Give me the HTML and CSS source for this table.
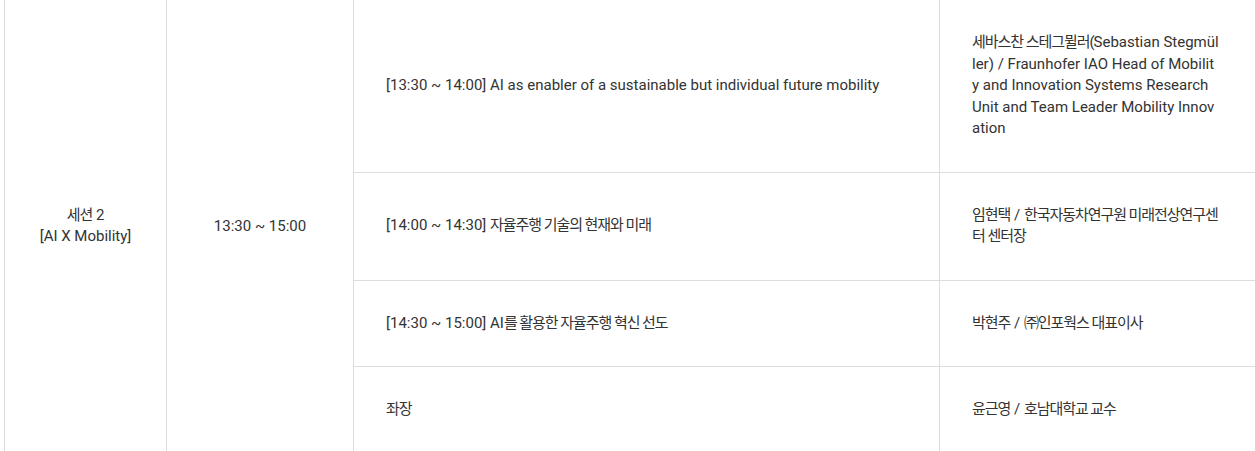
FILE: index.html
```html
<!DOCTYPE html>
<html lang="ko">
<head>
<meta charset="utf-8">
<link rel="stylesheet" href="styles.css">
</head>
<body>
<table class="program">
  <colgroup>
    <col class="c-session">
    <col class="c-time">
    <col class="c-title">
    <col class="c-speaker">
  </colgroup>
  <tbody>
    <tr>
      <td class="center" rowspan="4"><span class="ko">세션</span> 2<br>[AI X Mobility]</td>
      <td class="center" rowspan="4">13:30 ~ 15:00</td>
      <td>[13:30 ~ 14:00] AI as enabler of a sustainable but individual future mobility</td>
      <td class="speaker"><span class="ko">세바스찬 스테그뮐러(</span>Sebastian Stegmüller) / Fraunhofer IAO Head of Mobility and Innovation Systems Research Unit and Team Leader Mobility Innovation</td>
    </tr>
    <tr>
      <td>[14:00 ~ 14:30] <span class="ko">자율주행 기술의 현재와 미래</span></td>
      <td class="speaker"><span class="ko">임현택</span> / <span class="ko">한국자동차연구원 미래전상연구센터 센터장</span></td>
    </tr>
    <tr>
      <td>[14:30 ~ 15:00] AI<span class="ko">를 활용한 자율주행 혁신 선도</span></td>
      <td class="speaker"><span class="ko">박현주</span> / <span class="ko">㈜인포웍스 대표이사</span></td>
    </tr>
    <tr>
      <td><span class="ko">좌장</span></td>
      <td class="speaker"><span class="ko">윤근영</span> / <span class="ko">호남대학교 교수</span></td>
    </tr>
  </tbody>
</table>
</body>
</html>
```

FILE: styles.css
```css
html, body {
  margin: 0;
  padding: 0;
  background: #fff;
}

body {
  overflow: hidden;
  font-family: Roboto, "Noto Sans CJK KR", sans-serif;
  font-size: 15px;
  color: #333;
}

.program {
  margin: -1px 0 0 4px;
  border-collapse: collapse;
  table-layout: fixed;
  width: 1252px;
}

.c-session { width: 162px; }
.c-time { width: 187px; }
.c-title { width: 586px; }
.c-speaker { width: 317px; }

.program td {
  border: 1px solid #dddddd;
  padding: 32px 32px;
  line-height: 21.5px;
  vertical-align: middle;
  text-align: left;
}

.program td.center {
  text-align: center;
  padding-left: 10px;
  padding-right: 10px;
}

.program td.speaker {
  word-break: break-all;
  padding-right: 36px;
}

.ko {
  letter-spacing: -0.07em;
}
```
